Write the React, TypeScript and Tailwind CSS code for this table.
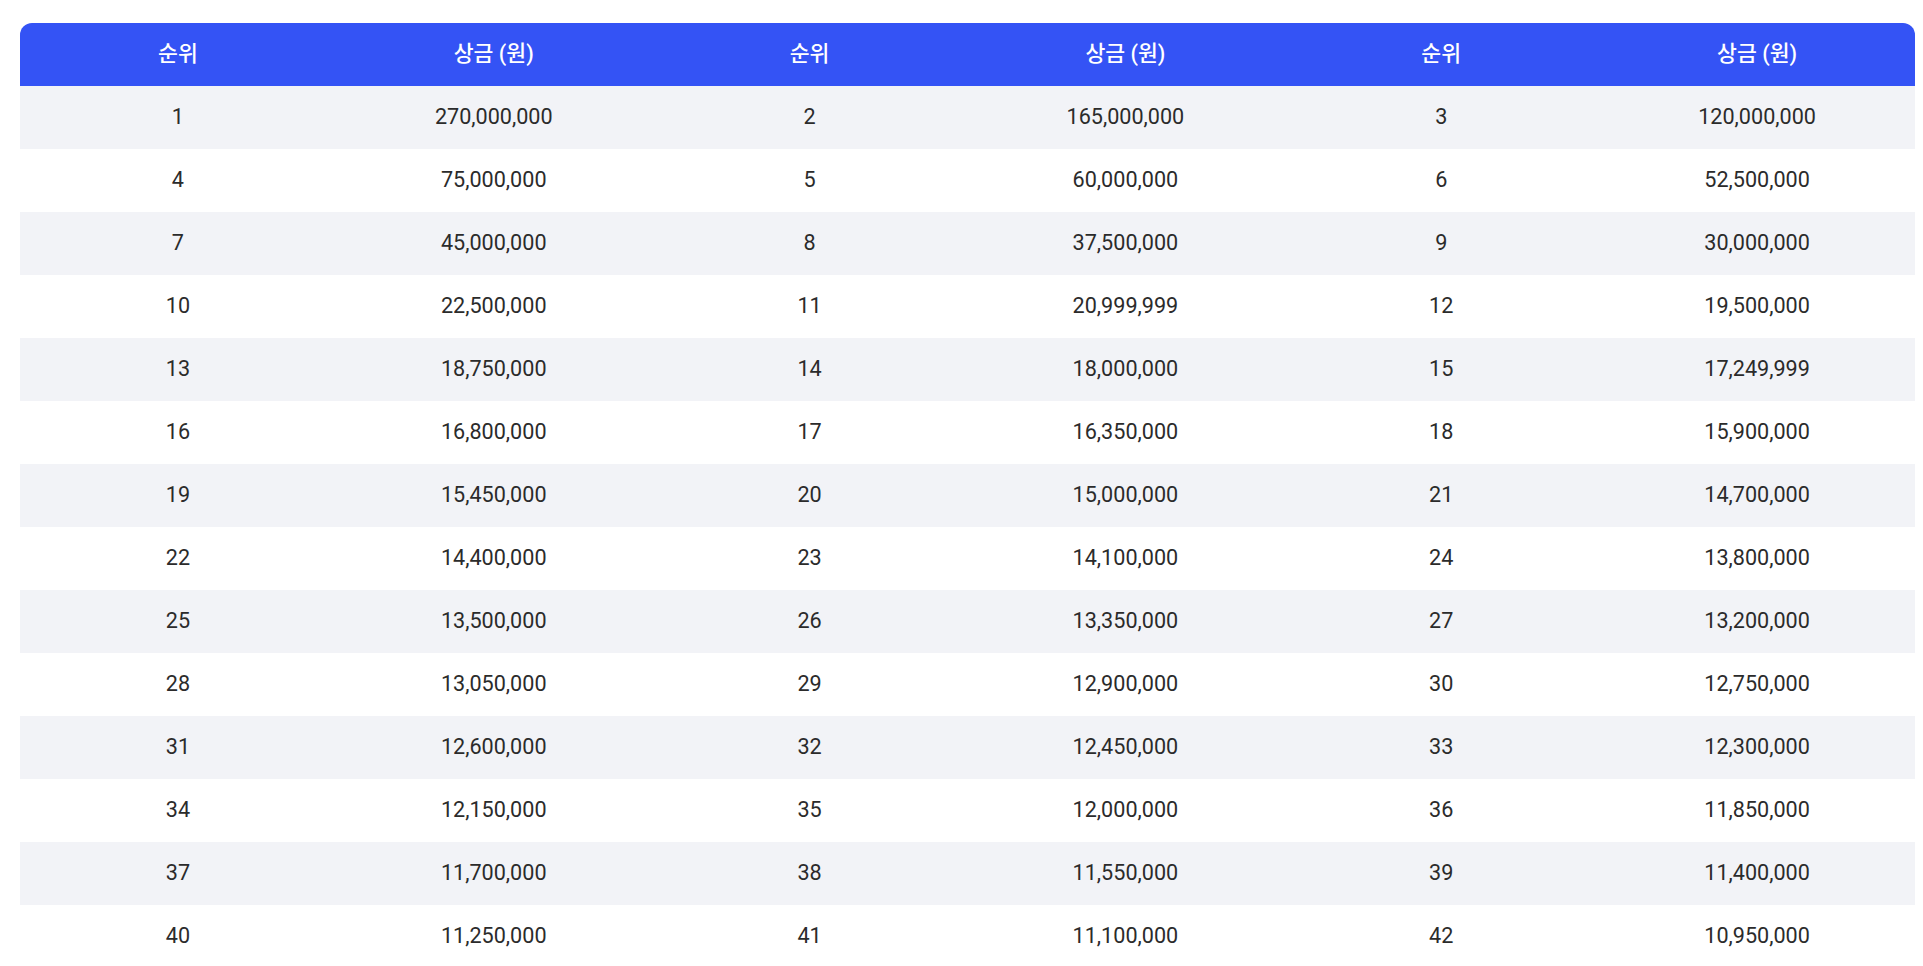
import React from 'react'

const prizes = [
  '270,000,000', '165,000,000', '120,000,000',
  '75,000,000', '60,000,000', '52,500,000',
  '45,000,000', '37,500,000', '30,000,000',
  '22,500,000', '20,999,999', '19,500,000',
  '18,750,000', '18,000,000', '17,249,999',
  '16,800,000', '16,350,000', '15,900,000',
  '15,450,000', '15,000,000', '14,700,000',
  '14,400,000', '14,100,000', '13,800,000',
  '13,500,000', '13,350,000', '13,200,000',
  '13,050,000', '12,900,000', '12,750,000',
  '12,600,000', '12,450,000', '12,300,000',
  '12,150,000', '12,000,000', '11,850,000',
  '11,700,000', '11,550,000', '11,400,000',
  '11,250,000', '11,100,000', '10,950,000',
]

// 3 rank/prize pairs per row
const rows: { rank: number; prize: string }[][] = []
for (let i = 0; i < prizes.length; i += 3) {
  rows.push(
    prizes.slice(i, i + 3).map((prize, j) => ({ rank: i + j + 1, prize }))
  )
}

export default function App() {
  return (
    <div
      className="min-h-screen bg-white pt-[23px] pl-[20px] pr-[8px]"
      style={{ fontFamily: 'Roboto, "Noto Sans CJK KR", sans-serif' }}
    >
      <div className="overflow-hidden rounded-t-xl">
        <table className="w-full table-fixed border-collapse text-[21.6px] text-[#2b2b2b]">
          <thead>
            <tr className="h-[63px] bg-[#3453f5] text-white">
              {[0, 1, 2].map((k) => (
                <React.Fragment key={k}>
                  <th className="font-medium">순위</th>
                  <th className="font-medium">상금 (원)</th>
                </React.Fragment>
              ))}
            </tr>
          </thead>
          <tbody>
            {rows.map((row, idx) => (
              <tr
                key={idx}
                className={`h-[63px] ${idx % 2 === 0 ? 'bg-[#f2f3f7]' : 'bg-white'}`}
              >
                {row.map((cell) => (
                  <React.Fragment key={cell.rank}>
                    <td className="text-center">{cell.rank}</td>
                    <td className="text-center">{cell.prize}</td>
                  </React.Fragment>
                ))}
              </tr>
            ))}
          </tbody>
        </table>
      </div>
    </div>
  )
}
